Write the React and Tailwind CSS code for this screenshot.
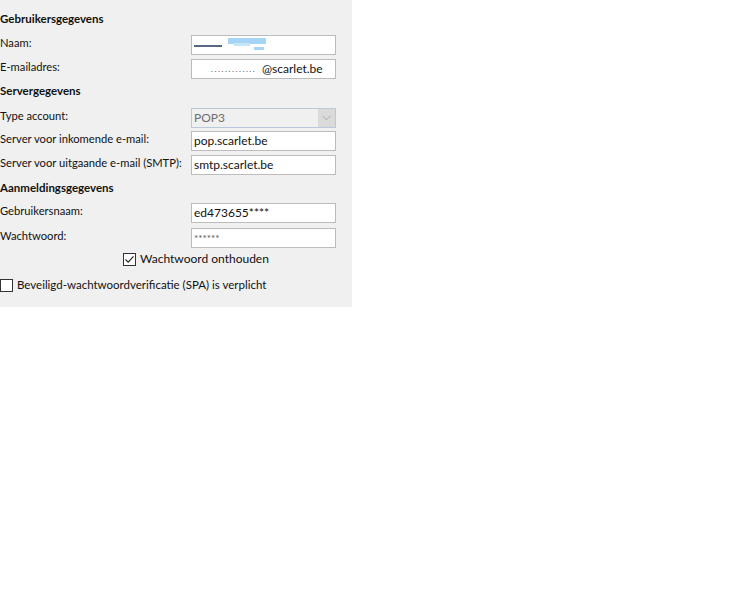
import React from 'react';

const font = { fontFamily: '"Segoe UI", Lato, "Noto Sans", sans-serif' };

const Heading = ({ children, className = '' }) => (
  <div className={`h-4 text-[11.5px] leading-4 font-bold text-[#111] ${className}`}>{children}</div>
);

const Row = ({ label, children, className = 'mt-1' }) => (
  <div className={`flex h-5 items-center ${className}`}>
    <div className="w-[191px] text-[11.2px] leading-4 text-[#111] whitespace-nowrap -translate-y-[2px]">{label}</div>
    {children}
  </div>
);

const TextBox = ({ children }) => (
  <div className="flex h-5 w-[145px] items-center overflow-hidden whitespace-nowrap border border-[#bcbcbc] bg-white px-[2px] text-[12px] text-[#111]">
    {children}
  </div>
);

const Check = ({ checked }) => (
  <span className="flex h-[13px] w-[13px] shrink-0 items-center justify-center border border-[#333] bg-white">
    {checked && (
      <svg width="11" height="11" viewBox="0 0 11 11" fill="none">
        <path d="M1.5 5.5 L4.2 8.2 L9.5 2.3" stroke="#222" strokeWidth="1.1" />
      </svg>
    )}
  </span>
);

export default function App() {
  return (
    <div className="min-h-[600px] bg-white" style={font}>
      <div className="w-[352px] h-[307px] bg-[#f0f0f0] pt-[11px]">
        <Heading>Gebruikersgegevens</Heading>
        <Row label="Naam:" className="mt-2">
          <TextBox>
            <div className="relative h-full w-full">
              <span className="absolute left-0 top-[9px] h-[2px] w-[28px] bg-[#5a6782]" />
              <span className="absolute left-[34px] top-[2px] h-[6px] w-[38px] bg-[#a6d4f6]" />
              <span className="absolute left-[40px] top-[7px] h-[3px] w-[16px] bg-[#c8e4f8]" />
              <span className="absolute left-[60px] top-[11px] h-[3px] w-[10px] bg-[#a6d4f6]" />
            </div>
          </TextBox>
        </Row>
        <Row label="E-mailadres:">
          <TextBox>
            <span className="ml-[17px] w-[51px] overflow-hidden text-[8px] tracking-[1.6px] text-[#445]">.............</span>
            <span className="text-[12px] text-[#111]">@scarlet.be</span>
          </TextBox>
        </Row>

        <Heading className="mt-1">Servergegevens</Heading>
        <Row label="Type account:" className="mt-[9px]">
          <div className="flex h-5 w-[145px] items-center border border-[#b9c8dc] bg-[#f0f0f0]">
            <span className="flex-1 pl-[2px] text-[12px] text-[#6d6d6d]">POP3</span>
            <span className="flex h-full w-[17px] items-center justify-center bg-[#dadada]">
              <svg width="9" height="6" viewBox="0 0 9 6" fill="none">
                <path d="M0.5 0.8 L4.5 4.8 L8.5 0.8" stroke="#a8a8a8" strokeWidth="1" />
              </svg>
            </span>
          </div>
        </Row>
        <Row label="Server voor inkomende e-mail:" className="mt-[3px]">
          <TextBox>pop.scarlet.be</TextBox>
        </Row>
        <Row label="Server voor uitgaande e-mail (SMTP):">
          <TextBox>smtp.scarlet.be</TextBox>
        </Row>

        <Heading className="mt-[5px]">Aanmeldingsgegevens</Heading>
        <Row label="Gebruikersnaam:" className="mt-[7px]">
          <TextBox>ed473655****</TextBox>
        </Row>
        <Row label="Wachtwoord:" className="mt-[5px]">
          <TextBox>
            <span className="text-[10px] text-[#555]">******</span>
          </TextBox>
        </Row>

        <div className="mt-[2px] flex h-[18px] items-center gap-[4px] pl-[123px] text-[12px] text-[#111]">
          <Check checked />
          <span>Wachtwoord onthouden</span>
        </div>
        <div className="mt-[8px] flex h-[18px] items-center gap-[4px] text-[11.5px] text-[#111]">
          <Check />
          <span>Beveiligd-wachtwoordverificatie (SPA) is verplicht</span>
        </div>
      </div>
    </div>
  );
}
